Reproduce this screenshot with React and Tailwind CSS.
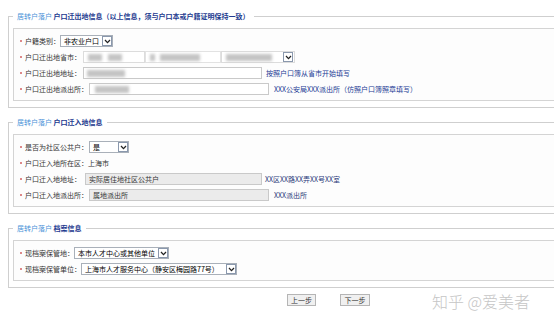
import React from 'react';

const BLUE = 'text-[#223a94]';

function Arrow() {
  return (
    <span className="ml-auto flex h-[10px] w-[10px] shrink-0 items-center justify-center border border-[#8a98ad] bg-white">
      <svg width="7" height="5" viewBox="0 0 7 5">
        <path d="M1 1l2.5 2.6L6 1" stroke="#222" strokeWidth="1.3" fill="none" />
      </svg>
    </span>
  );
}

function Select({ width, children }) {
  return (
    <div className={`flex h-[12px] items-center border border-[#a9b0b9] bg-white pl-[3px] ${width}`}>
      <span className="whitespace-nowrap">{children}</span>
      <Arrow />
    </div>
  );
}

function Blur({ w, className = '' }) {
  return <span className={`h-[7px] bg-[#c4c4c4] blur-[1.5px] ${w} ${className}`} />;
}

function Row({ label, children }) {
  return (
    <div className="flex h-[16px] items-center">
      <span className="mr-[3px] h-[2px] w-[2px] bg-[#d88]" />
      <span className="whitespace-nowrap text-[#333]">{label}</span>
      {children}
    </div>
  );
}

function Section({ title, children, className = '' }) {
  return (
    <fieldset className={`ml-[8px] w-[700px] min-w-[700px] border border-[#cfcfcf] pt-[6px] pr-[4px] pb-[6px] pl-[4px] ${className}`}>
      <legend className="px-[4px] leading-[12px]">
        <span className="text-[#4a92d8]">居转户落户</span>{' '}
        <span className="font-bold text-[#1d3a8f]">{title}</span>
      </legend>
      <div className="border border-[#d4d4d4] bg-[#fdfdfd] pt-[4px] pb-[3px] pl-[6px]">{children}</div>
    </fieldset>
  );
}

export default function App() {
  return (
    <div className="relative h-[325px] w-[554px] overflow-hidden bg-white pt-[10px] text-[7px] font-['Noto_Sans_CJK_SC','Noto_Sans',sans-serif]">
      <Section title="户口迁出地信息（以上信息，须与户口本或户籍证明保持一致）">
        <Row label="户籍类别：">
          <Select width="w-[53px]">非农业户口</Select>
        </Row>
        <Row label="户口迁出地省市：">
          <div className="ml-[2px] flex h-[12px] w-[62px] items-center gap-[6px] border border-[#dcdcdc] bg-white pl-[4px]">
            <Blur w="w-[14px]" />
            <Blur w="w-[14px]" />
          </div>
          <div className="flex h-[12px] w-[76px] items-center gap-[5px] border border-[#e2e2e2] bg-white pl-[4px]">
            <Blur w="w-[5px]" />
            <Blur w="w-[40px]" />
          </div>
          <div className="flex h-[12px] w-[74px] items-center border border-[#dcdcdc] bg-white pl-[4px] pr-[1px]">
            <Blur w="w-[46px]" />
            <Arrow />
          </div>
        </Row>
        <Row label="户口迁出地地址：">
          <div className="ml-[2px] flex h-[12px] w-[179px] items-center border border-[#c9c9c9] bg-white pl-[3px]">
            <Blur w="w-[38px]" />
          </div>
          <span className={`ml-[4px] whitespace-nowrap ${BLUE}`}>按照户口簿从省市开始填写</span>
        </Row>
        <Row label="户口迁出地派出所：">
          <div className="ml-[1px] flex h-[12px] w-[180px] items-center border border-[#c9c9c9] bg-white pl-[5px]">
            <Blur w="w-[34px]" />
          </div>
          <span className={`ml-[5px] whitespace-nowrap ${BLUE}`}>XXX公安局XXX派出所（仿照户口簿照章填写）</span>
        </Row>
      </Section>

      <Section title="户口迁入地信息" className="mt-[8px]">
        <Row label="是否为社区公共户：">
          <Select width="ml-[1px] w-[40px]">是</Select>
        </Row>
        <Row label="户口迁入地所在区：上海市" />
        <Row label="户口迁入地地址：">
          <div className="ml-[4px] flex h-[12px] w-[177px] items-center border border-[#c9c9c9] bg-[#ebebeb] pl-[3px] text-[#333]">
            实际居住地社区公共户
          </div>
          <span className="ml-[3px] whitespace-nowrap text-[#2a3a7a]">XX区XX路XX弄XX号XX室</span>
        </Row>
        <Row label="户口迁入地派出所：">
          <div className="ml-[1px] flex h-[12px] w-[180px] items-center border border-[#c9c9c9] bg-[#ebebeb] pl-[3px] text-[#333]">
            属地派出所
          </div>
          <span className="ml-[5px] whitespace-nowrap text-[#2a3a7a]">XXX派出所</span>
        </Row>
      </Section>

      <Section title="档案信息" className="mt-[8px]">
        <Row label="现档案保管地：">
          <Select width="w-[95px]">本市人才中心或其他单位</Select>
        </Row>
        <Row label="现档案保管单位：">
          <Select width="w-[156px]">上海市人才服务中心（静安区梅园路77号）</Select>
        </Row>
      </Section>

      <div className="mt-[6px] flex gap-[24px] pl-[287px]">
        <button className="h-[12px] w-[29px] border border-[#b5b5b5] bg-[#f0f0f0] text-[#333]">上一步</button>
        <button className="h-[12px] w-[30px] border border-[#b5b5b5] bg-[#f0f0f0] text-[#333]">下一步</button>
      </div>

      <div className="absolute left-[432px] top-[289px] whitespace-nowrap text-[16px] font-light text-[#c6c6c6]">
        知乎 @爱美者
      </div>
    </div>
  );
}
